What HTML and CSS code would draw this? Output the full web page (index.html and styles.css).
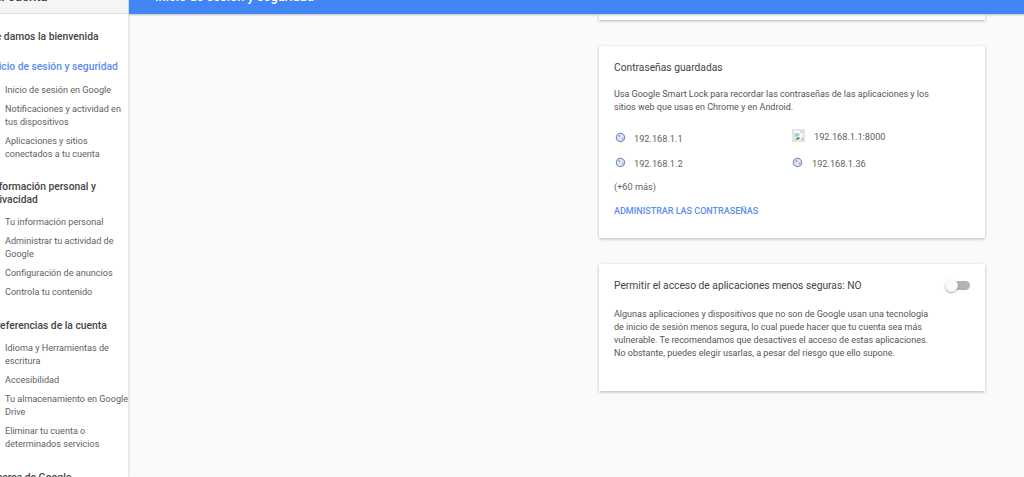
FILE: index.html
```html
<!DOCTYPE html>
<html lang="es">
<head>
<meta charset="utf-8">
<title>Inicio de sesión y seguridad</title>
<link rel="stylesheet" href="styles.css">
</head>
<body>
<div class="page">
  <aside class="sidebar">
    <div class="side-head"><span class="side-title">Mi cuenta</span></div>
    <nav class="side-nav">
      <h2 class="nav-head nav-first">Te damos la bienvenida</h2>
      <h2 class="nav-head nav-active">Inicio de sesión y seguridad</h2>
      <a class="nav-item">Inicio de sesión en Google</a>
      <a class="nav-item">Notificaciones y actividad en tus dispositivos</a>
      <a class="nav-item">Aplicaciones y sitios conectados a tu cuenta</a>
      <h2 class="nav-head nav-tight">Información personal y privacidad</h2>
      <a class="nav-item">Tu información personal</a>
      <a class="nav-item">Administrar tu actividad de Google</a>
      <a class="nav-item">Configuración de anuncios</a>
      <a class="nav-item">Controla tu contenido</a>
      <h2 class="nav-head">Preferencias de la cuenta</h2>
      <a class="nav-item">Idioma y Herramientas de escritura</a>
      <a class="nav-item">Accesibilidad</a>
      <a class="nav-item">Tu almacenamiento en Google Drive</a>
      <a class="nav-item">Eliminar tu cuenta o determinados servicios</a>
      <h2 class="nav-head">Acerca de Google</h2>
    </nav>
  </aside>
  <main class="main">
    <header class="topbar"><span class="topbar-title">Inicio de sesión y seguridad</span></header>
    <div class="content">
      <section class="card card-stub"></section>
      <section class="card card-pass">
        <h3 class="card-title">Contraseñas guardadas</h3>
        <p class="card-text">Usa Google Smart Lock para recordar las contraseñas de las aplicaciones y los sitios web que usas en Chrome y en Android.</p>
        <div class="pass-grid">
          <div class="pass"><svg class="globe" viewBox="0 0 12 12"><circle cx="6" cy="6" r="4.5" fill="#e6e8f2" stroke="#7f8fc0" stroke-width="1.4"/><path d="M3.4 3.6c1.5-.8 3 0 2.7 1.1-.3.9-1.5.6-1.7 1.5-.1.7.9.9 1.100 2M7.600 6.200c.8-.3 1.600 0 1.600.8 0 .9-.9 1.400-1.500 1.200z" fill="#9aa7d0"/></svg><span class="pass-name">192.168.1.1</span></div>
          <div class="pass pass-img"><svg class="broken" viewBox="0 0 14 14"><rect width="14" height="14" fill="#e2e2e2"/><path d="M2.5 1.5h6.500l2.500 2.500v8h-9z" fill="#f8f8f8"/><path d="M3 4.500h5v2.500l-5 2.500z" fill="#a6c4ec"/><path d="M3 11.500l3.500-3 2.500.8-2 2.200z" fill="#4fa045"/><path d="M9.500 11.500l2-2v2z" fill="#6fae62"/><path d="M9 1.500l2.500 2.500h-2.500z" fill="#c4c4c4"/></svg><span class="pass-name">192.168.1.1:8000</span></div>
          <div class="pass"><svg class="globe" viewBox="0 0 12 12"><circle cx="6" cy="6" r="4.5" fill="#e6e8f2" stroke="#7f8fc0" stroke-width="1.4"/><path d="M3.4 3.6c1.5-.8 3 0 2.7 1.1-.3.9-1.5.6-1.7 1.5-.1.7.9.9 1.100 2M7.600 6.200c.8-.3 1.600 0 1.600.8 0 .9-.9 1.400-1.500 1.200z" fill="#9aa7d0"/></svg><span class="pass-name">192.168.1.2</span></div>
          <div class="pass pass-near"><svg class="globe" viewBox="0 0 12 12"><circle cx="6" cy="6" r="4.5" fill="#e6e8f2" stroke="#7f8fc0" stroke-width="1.4"/><path d="M3.4 3.6c1.5-.8 3 0 2.7 1.1-.3.9-1.5.6-1.7 1.5-.1.7.9.9 1.100 2M7.600 6.200c.8-.3 1.600 0 1.600.8 0 .9-.9 1.400-1.500 1.200z" fill="#9aa7d0"/></svg><span class="pass-name">192.168.1.36</span></div>
        </div>
        <p class="more">(+60 más)</p>
        <a class="manage">ADMINISTRAR LAS CONTRASEÑAS</a>
      </section>
      <section class="card card-less">
        <div class="less-head">
          <h3 class="card-title">Permitir el acceso de aplicaciones menos seguras: NO</h3>
          <span class="toggle"><span class="toggle-knob"></span></span>
        </div>
        <p class="card-text">Algunas aplicaciones y dispositivos que no son de Google usan una tecnología de inicio de sesión menos segura, lo cual puede hacer que tu cuenta sea más vulnerable. Te recomendamos que desactives el acceso de estas aplicaciones. No obstante, puedes elegir usarlas, a pesar del riesgo que ello supone.</p>
      </section>
    </div>
  </main>
</div>
</body>
</html>
```
FILE: styles.css
```css
html, body {
  margin: 0;
  height: 100%;
  overflow: hidden;
}
body {
  font-family: Roboto, "Liberation Sans", sans-serif;
  background: #fafafa;
  color: #555;
}
h2, h3, p { margin: 0; font-weight: 400; }

.page { display: flex; height: 477px; overflow: hidden; }

.sidebar {
  flex: 0 0 128px;
  background: #fff;
  border-right: 1px solid #e6e6e6;
  box-shadow: 1px 0 2px rgba(0,0,0,.05);
  overflow: hidden;
  z-index: 1;
}
.side-head {
  height: 13px;
  background: #f5f5f5;
  border-bottom: 1px solid #e0e0e0;
  overflow: hidden;
}
.side-title {
  display: block;
  margin: -11px 0 0 -10px;
  font-size: 13px;
  line-height: 16px;
  font-weight: 500;
  color: #444;
}
.side-nav { padding: 0 0 0 5px; }
.nav-head {
  margin: 20px 0 10px -15px;
  font-size: 10.3px;
  line-height: 13px;
  font-weight: 500;
  color: #444;
  width: 137px;
}
.nav-first { margin-top: 16px; }
.nav-active { color: #5a8df0; margin-top: 17px; margin-bottom: 11px; }
.nav-tight { margin-top: 19px; }
.nav-item {
  display: block;
  width: 124px;
  margin-bottom: 6px;
  font-size: 9.1px;
  line-height: 13px;
  color: #616161;
}

.main { flex: 1; min-width: 0; }
.topbar {
  height: 14px;
  background: #4285f4;
  box-shadow: 0 1px 2px rgba(0,0,0,.25);
  overflow: hidden;
  position: relative;
  z-index: 1;
}
.topbar-title {
  display: block;
  margin: -11px 0 0 26px;
  font-size: 12.8px;
  line-height: 16px;
  font-weight: 500;
  color: #fff;
}
.content { padding-left: 470px; width: 386px; }
.card {
  background: #fff;
  box-shadow: 0 1px 3px rgba(0,0,0,.28);
  box-sizing: border-box;
  padding: 0 15px;
  margin-bottom: 26px;
}
.card-stub { height: 6px; }
.card-pass { height: 192px; padding-top: 15px; }
.card-less { height: 127px; padding-top: 15px; }
.card-title {
  font-size: 10.25px;
  line-height: 13px;
  color: #444;
}
.card-text {
  width: 322px;
  margin-top: 14px;
  font-size: 9px;
  line-height: 13px;
  color: #555;
}
.card-less .card-text { margin-top: 16px; }
.pass-grid {
  display: grid;
  grid-template-columns: 177px 1fr;
  grid-template-rows: 25px 25px;
  margin-top: 12px;
}
.pass { display: flex; align-items: center; height: 25px; font-size: 9.2px; color: #616161; }
.globe { width: 11px; height: 11px; margin: 0 8px 2px 1px; flex: none; }
.pass-name { line-height: 13px; }
.broken { width: 13px; height: 13px; margin: 0 9px 2px 0; flex: none; }
.pass-img { margin-top: -2px; margin-left: 1px; }
.pass-near .globe { margin-right: 9px; }
.more { margin-top: 4px; font-size: 9.2px; line-height: 13px; color: #616161; }
.manage {
  display: block;
  margin-top: 12px;
  font-size: 9px;
  line-height: 13px;
  font-weight: 500;
  color: #5a8df0;
}
.less-head { display: flex; justify-content: space-between; align-items: center; }
.toggle {
  position: relative;
  display: block;
  width: 25px;
  height: 9px;
  border-radius: 5px;
  background: #b3b3b3;
}
.toggle-knob {
  position: absolute;
  left: 0;
  top: -2px;
  width: 13px;
  height: 13px;
  border-radius: 50%;
  background: #fafafa;
  box-shadow: 0 1px 2px rgba(0,0,0,.35);
}
```
